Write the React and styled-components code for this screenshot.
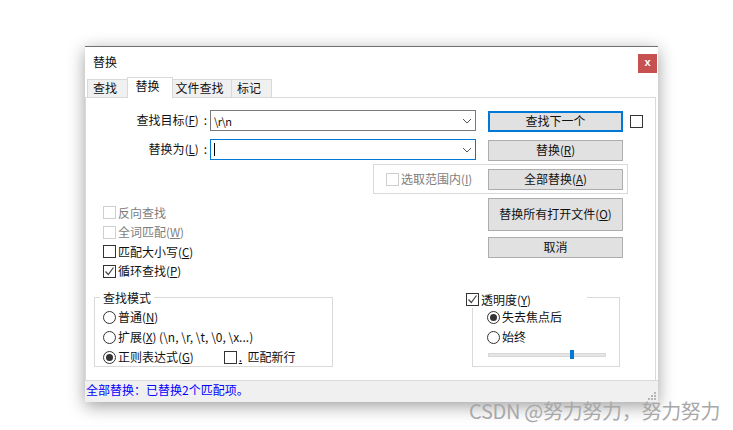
import React from "react";
import styled, { createGlobalStyle } from "styled-components";

const FONT = `"Noto Sans CJK SC", "Liberation Sans", sans-serif`;

const Global = createGlobalStyle`
  html, body {
    margin: 0;
    padding: 0;
    background: #fff;
    overflow: hidden;
  }
  body {
    font-family: ${FONT};
    font-size: 12px;
    color: #111;
  }
  * { box-sizing: border-box; }
`;

const Chevron = () => (
  <svg width="10" height="6" viewBox="0 0 10 6" fill="none" stroke="#555" strokeWidth="1">
    <path d="M1 1l4 4 4-4" />
  </svg>
);

const Tick = ({ color }) => (
  <svg width="11" height="11" viewBox="0 0 11 11" fill="none" stroke={color} strokeWidth="1.2">
    <path d="M1.5 5.5l2.8 3 5.2-7" />
  </svg>
);

const CheckBox = ({ label, checked, disabled }) => (
  <Option $disabled={disabled}>
    <Box $disabled={disabled}>{checked && <Tick color="#444" />}</Box>
    <OptionText>{label}</OptionText>
  </Option>
);

const RadioBtn = ({ label, checked }) => (
  <Option $h={20}>
    <Circle>{checked && <Dot />}</Circle>
    <OptionText>{label}</OptionText>
  </Option>
);

const Key = ({ k }) => (
  <Mnemonic>
    (<u>{k}</u>)
  </Mnemonic>
);

const App = () => {
  return (
    <Page>
      <Global />
      <Dialog>
        <TitleBar>
          <span>替换</span>
          <CloseBtn>x</CloseBtn>
        </TitleBar>
        <TabBar>
          <Tab $w={41}>查找</Tab>
          <Tab $w={46} $active>替换</Tab>
          <Tab $w={60}>文件查找</Tab>
          <Tab $w={41}>标记</Tab>
        </TabBar>
        <Panel>
          <UpperRow>
            <LeftCol>
              <FieldRow>
                <FieldLabel>查找目标<Key k="F" /><Colon>:</Colon></FieldLabel>
                <Combo>
                  <ComboValue>\r\n</ComboValue>
                  <Chevron />
                </Combo>
              </FieldRow>
              <FieldRow>
                <FieldLabel>替换为<Key k="L" /><Colon>:</Colon></FieldLabel>
                <Combo $focus>
                  <Caret />
                  <Chevron />
                </Combo>
              </FieldRow>
              <Options>
                <CheckBox disabled label={<>反向查找</>} />
                <CheckBox disabled label={<>全词匹配<Key k="W" /></>} />
                <CheckBox label={<>匹配大小写<Key k="C" /></>} />
                <CheckBox checked label={<>循环查找<Key k="P" /></>} />
              </Options>
            </LeftCol>
            <Buttons>
              <ButtonRow>
                <Button $primary><span>查找下一个</span></Button>
                <Box />
              </ButtonRow>
              <Button><span>替换<Key k="R" /></span></Button>
              <Button><span>全部替换<Key k="A" /></span></Button>
              <Button $h={33}><span>替换所有打开文件<Key k="O" /></span></Button>
              <Button $top={-2}><span>取消</span></Button>
            </Buttons>
            <ScopeFrame>
              <CheckBox disabled label={<>选取范围内<Key k="I" /></>} />
            </ScopeFrame>
          </UpperRow>
          <LowerRow>
            <ModeGroup>
              <Legend>查找模式</Legend>
              <RadioBtn label={<>普通<Key k="N" /></>} />
              <RadioBtn label={<>扩展<Key k="X" /> (\n, \r, \t, \0, \x...)</>} />
              <ModeLast>
                <RadioBtn checked label={<>正则表达式<Key k="G" /></>} />
                <CheckBox label={<><u>.</u>{"\u00a0\u00a0"}匹配新行</>} />
              </ModeLast>
            </ModeGroup>
            <AlphaGroup>
              <AlphaLegend>
                <CheckBox checked label={<>透明度<Key k="Y" /></>} />
              </AlphaLegend>
              <RadioBtn checked label={<>失去焦点后</>} />
              <RadioBtn label={<>始终</>} />
              <Track>
                <Thumb />
              </Track>
            </AlphaGroup>
          </LowerRow>
        </Panel>
        <StatusBar>
          全部替换：已替换2个匹配项。
          <Grip width="10" height="10" viewBox="0 0 10 10" fill="#b5b5b5">
            <rect x="7" y="1" width="2" height="2" />
            <rect x="4" y="4" width="2" height="2" />
            <rect x="7" y="4" width="2" height="2" />
            <rect x="1" y="7" width="2" height="2" />
            <rect x="4" y="7" width="2" height="2" />
            <rect x="7" y="7" width="2" height="2" />
          </Grip>
        </StatusBar>
      </Dialog>
      <Watermark>CSDN @努力努力，努力努力</Watermark>
    </Page>
  );
};

const Page = styled.div`
  position: relative;
  width: 733px;
  height: 430px;
  padding: 46px 0 0 85px;
  overflow: hidden;
`;

const Dialog = styled.div`
  display: flex;
  flex-direction: column;
  width: 573px;
  height: 356px;
  background: #fff;
  border-top: 1px solid #707070;
  box-shadow: 0 4px 16px rgba(0, 0, 0, 0.38);
`;

const TitleBar = styled.div`
  display: flex;
  justify-content: space-between;
  align-items: flex-start;
  height: 30px;
  padding: 7px 1px 0 8px;
  line-height: 16px;
`;

const CloseBtn = styled.div`
  width: 19px;
  height: 19px;
  background: #c75050;
  color: #fff;
  font: bold 11px/17px "Liberation Sans", sans-serif;
  text-align: center;
`;

const TabBar = styled.div`
  display: flex;
  align-items: flex-end;
  height: 21px;
  padding-left: 3px;
  margin-bottom: -1px;
  position: relative;
  z-index: 1;
`;

const Tab = styled.div`
  width: ${(p) => p.$w}px;
  height: ${(p) => (p.$active ? 21 : 19)}px;
  margin-left: -1px;
  padding-right: 5px;
  background: ${(p) => (p.$active ? "#fff" : "#f0f0f0")};
  border: 1px solid #d9d9d9;
  border-bottom: ${(p) => (p.$active ? "none" : "1px solid #d9d9d9")};
  text-align: center;
  line-height: 16px;
  font-size: 12px;
  z-index: ${(p) => (p.$active ? 1 : 0)};
`;

const Panel = styled.div`
  flex: 1;
  display: flex;
  flex-direction: column;
  justify-content: space-between;
  position: relative;
  margin-right: 2px;
  padding: 12px 0 13px 0;
  border: 1px solid #d9d9d9;
  border-width: 1px 1px 0 1px;
`;

const UpperRow = styled.div`
  display: flex;
`;

const LeftCol = styled.div`
  width: 402px;
  padding-left: 17px;
`;

const FieldRow = styled.div`
  display: flex;
  align-items: center;
  gap: 3px;
  height: 21px;
  margin-bottom: 8px;
`;

const FieldLabel = styled.div`
  width: 104px;
  margin-top: -2px;
  text-align: right;
  white-space: nowrap;
`;

const Colon = styled.span`
  margin-left: 5px;
`;

const Combo = styled.div`
  display: flex;
  justify-content: space-between;
  align-items: center;
  width: 266px;
  height: 21px;
  padding: 0 3px 0 3px;
  background: #fff;
  border: 1px solid ${(p) => (p.$focus ? "#0078d7" : "#7a7a7a")};
  line-height: 16px;
`;

const ComboValue = styled.span`
  font-size: 11px;
  letter-spacing: -0.6px;
`;

const Caret = styled.span`
  width: 1px;
  height: 13px;
  background: #000;
`;

const Mnemonic = styled.span`
  color: inherit;
  font-size: 11.5px;
`;

const Options = styled.div`
  margin-top: 43px;
`;

const Option = styled.div`
  display: flex;
  align-items: center;
  gap: 2px;
  height: ${(p) => p.$h || 19.5}px;
  white-space: nowrap;
  color: ${(p) => (p.$disabled ? "#7d7d7d" : "#111")};
`;

const OptionText = styled.span`
  line-height: 16px;
`;

const Box = styled.span`
  display: flex;
  align-items: center;
  justify-content: center;
  flex: none;
  width: 13px;
  height: 13px;
  background: #fff;
  border: 1px solid ${(p) => (p.$disabled ? "#cfcfcf" : "#333")};
`;

const Circle = styled.span`
  display: flex;
  align-items: center;
  justify-content: center;
  flex: none;
  width: 13px;
  height: 13px;
  border-radius: 50%;
  border: 1px solid #333;
`;

const Dot = styled.span`
  width: 7px;
  height: 7px;
  border-radius: 50%;
  background: #333;
`;

const Buttons = styled.div`
  display: flex;
  flex-direction: column;
  gap: 8px;
  position: relative;
  z-index: 1;
  padding-top: 1px;
`;

const ButtonRow = styled.div`
  display: flex;
  align-items: center;
  gap: 7px;
`;

const Button = styled.div`
  display: flex;
  align-items: center;
  justify-content: center;
  width: 135px;
  height: ${(p) => p.$h || 21}px;
  margin-top: ${(p) => p.$top || 0}px;
  padding-bottom: 2px;
  background: #e1e1e1;
  border: ${(p) => (p.$primary ? "2px solid #0078d7" : "1px solid #adadad")};
  white-space: nowrap;
`;

const ScopeFrame = styled.div`
  position: absolute;
  left: 287px;
  top: 66px;
  display: flex;
  align-items: center;
  width: 255px;
  height: 30px;
  padding-left: 12px;
  border: 1px solid #d9d9d9;
`;

const LowerRow = styled.div`
  display: flex;
  justify-content: space-between;
  padding: 0 35px 0 8px;
`;

const ModeGroup = styled.div`
  position: relative;
  width: 239px;
  height: 70px;
  padding: 9px 0 0 8px;
  border: 1px solid #d9d9d9;
`;

const Legend = styled.div`
  position: absolute;
  left: 5px;
  top: -8px;
  padding: 0 3px;
  background: #fff;
  line-height: 16px;
`;

const ModeLast = styled.div`
  display: flex;
  align-items: center;
  gap: 30px;
`;

const AlphaGroup = styled.div`
  position: relative;
  width: 148px;
  height: 70px;
  padding: 9px 0 0 14px;
  border: 1px solid #d9d9d9;
`;

const AlphaLegend = styled.div`
  position: absolute;
  left: -7px;
  top: -8px;
  width: 121px;
  height: 18px;
  background: #fff;
`;

const Track = styled.div`
  position: relative;
  width: 118px;
  height: 4px;
  margin: 6px 0 0 1px;
  background: #e3e6e5;
  border: 1px solid #d8d8d8;
`;

const Thumb = styled.span`
  position: absolute;
  left: 81px;
  top: -4px;
  width: 4px;
  height: 9px;
  background: #0078d7;
`;

const StatusBar = styled.div`
  position: relative;
  height: 22px;
  padding-left: 1px;
  background: #f0f0f0;
  border-top: 1px solid #d9d9d9;
  color: #0000ff;
  line-height: 18px;
`;

const Grip = styled.svg`
  position: absolute;
  right: 1px;
  bottom: 1px;
`;

const Watermark = styled.div`
  position: absolute;
  left: 469px;
  top: 398px;
  color: #a8a8a8;
  font-size: 20px;
  letter-spacing: -0.3px;
  line-height: 26px;
  white-space: nowrap;
`;

export default App;
